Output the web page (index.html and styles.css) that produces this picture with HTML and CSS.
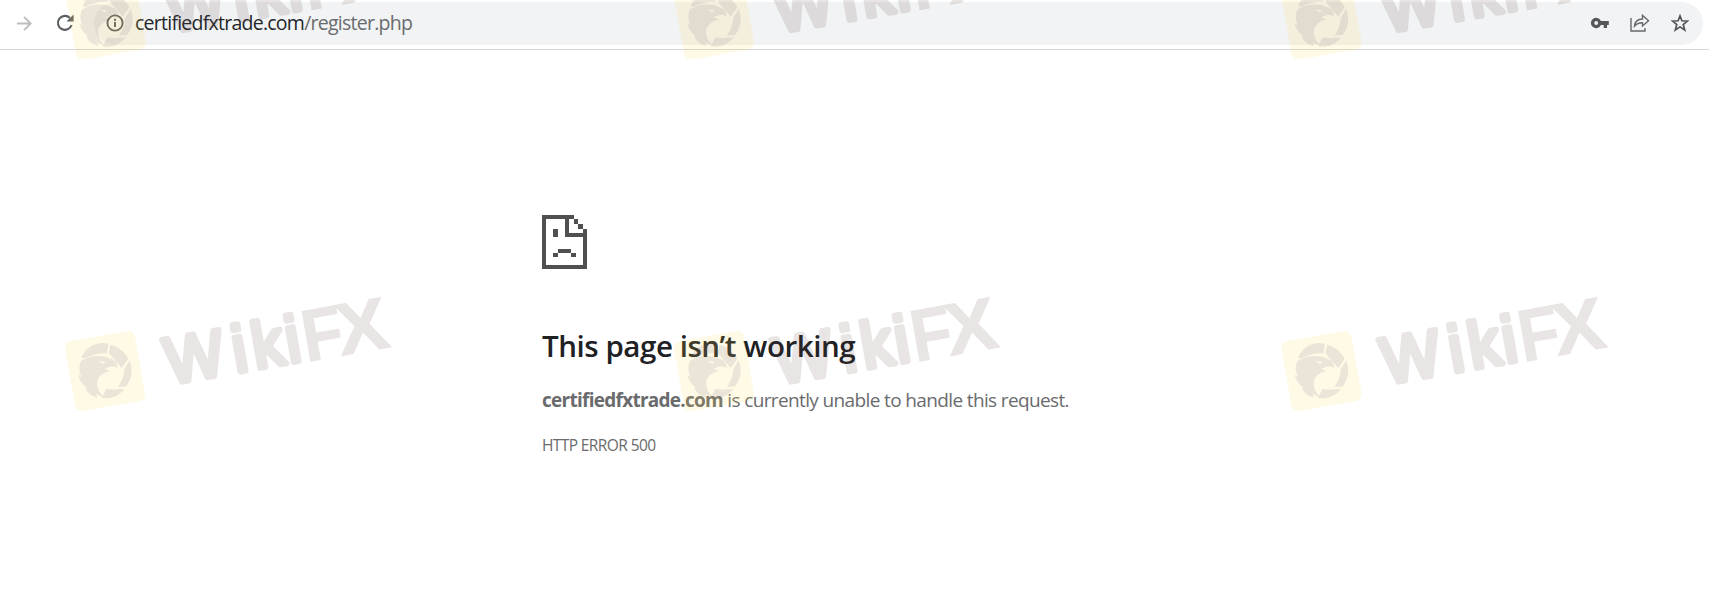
FILE: index.html
```html
<!DOCTYPE html>
<html lang="en">
<head>
<meta charset="utf-8">
<title>certifiedfxtrade.com</title>
<link rel="stylesheet" href="styles.css">
</head>
<body>
<header class="toolbar">
  <svg class="icon forward" viewBox="0 0 18 18"><path d="M1 9H15M8.5 2L15.5 9L8.5 16" fill="none" stroke="#bcbdbf" stroke-width="2"/></svg>
  <svg class="icon reload" viewBox="0 0 18 18"><path d="M15.6 11A7 7 0 1 1 14 4" fill="none" stroke="#5b5e61" stroke-width="2.1"/><path d="M17.6 .6V7.5H10.5Z" fill="#5b5e61"/></svg>
  <div class="omnibox">
    <svg class="icon info" viewBox="0 0 18 18"><circle cx="9" cy="9" r="7.6" fill="none" stroke="#5b5e61" stroke-width="1.9"/><path d="M8 8h2v5H8zM8 4.8h2v2H8z" fill="#5b5e61"/></svg>
    <span class="url"><span class="host">certifiedfxtrade.com</span>/register.php</span>
    <div class="actions">
      <svg class="icon key" viewBox="0 0 18 12"><path d="M9.9 4A5.2 5.2 0 1 0 9.9 8H12.7V11H16V8H17.8V4ZM5.2 7.9A1.9 1.9 0 1 1 5.2 4.1A1.9 1.9 0 1 1 5.2 7.9Z" fill="#55585b" fill-rule="evenodd"/></svg>
      <svg class="icon share" viewBox="0 0 20 18"><path d="M1 4V17H15V14M4.5 12C5 7.5 7.5 5.2 12.5 5V1.3L18.5 6.7L12.5 12V8.7C9 8.7 6.5 9.7 4.5 12Z" fill="none" stroke="#66696c" stroke-width="1.4"/></svg>
      <svg class="icon star" viewBox="0 0 18 18"><path d="M9 1.9L10.9 6.8L16.4 7.1L12.2 10.6L13.7 16L9 12.9L4.3 16L5.8 10.6L1.6 7.1L7.1 6.8Z" fill="none" stroke="#55585b" stroke-width="1.7"/></svg>
    </div>
  </div>
</header>
<main class="error">
  <svg class="sad-page" viewBox="0 0 45 55" preserveAspectRatio="none" shape-rendering="crispEdges"><path d="M0 0H32V4H36V9H41V14H45V55H0ZM4 4V51H41V22H23V4ZM27 4V18H41V14H36V9H32V4ZM11 14H16V22H11ZM16 35H29V39H16ZM11 39H16V43H11ZM29 39H34V43H29Z" fill="#505050" fill-rule="evenodd"/></svg>
  <h1 class="title">This page isn’t working</h1>
  <p class="message"><strong class="site">certifiedfxtrade.com</strong><span class="reason"> is currently unable to handle this request.</span></p>
  <p class="code">HTTP ERROR 500</p>
</main>
<svg class="watermarks" viewBox="0 0 1709 599" aria-hidden="true">
  <defs>
    <g id="mark">
      <rect x="-35.5" y="-35.5" width="71" height="71" rx="7" fill="#ffdc50" opacity=".14"/>
      <g fill="#645082" opacity=".12">
        <path d="M-18 -21C-10 -29 1 -30 8 -26L5 -17C-3 -19 -10 -18 -18 -16L-21 -17ZM10 -25C18 -21 23 -15 25 -8L17 0L11 -10L7 -17ZM26 -6C28 4 25 13 18 19L10 18C15 13 18 8 19 2ZM16 21C9 27 0 29 -8 26L-2 18C4 20 9 20 16 21Z"/>
        <path d="M-22 -14C-14 -18 0 -17 6 -12C11 -10 14 -7 13 -1C9 -4 4 -4 0 -2L5 1C-5 1 -11 7 -10 15C-10 19 -8 22 -5 26L-13 21L-12 25C-19 22 -22 17 -22 13L-20 14C-25 9 -27 3 -27 -1L-24 2C-26 -4 -25 -9 -22 -14ZM-5 -11L2 -9L0 -7Z" fill-rule="evenodd"/>
      </g>
      <g class="wordmark">
        <text class="soft" transform="translate(0 24) scale(1 1.05)"><tspan x="61">W</tspan><tspan x="129">i</tspan><tspan x="149">k</tspan><tspan x="183">i</tspan></text>
        <text class="sharp" transform="translate(200 26) scale(.95 1.05)">F</text>
        <text class="sharp" transform="translate(235 26) scale(1.1 1.05)">X</text>
      </g>
    </g>
  </defs>
  <use href="#mark" transform="translate(106 19.5) rotate(-10)"/>
  <use href="#mark" transform="translate(714 19.5) rotate(-10)"/>
  <use href="#mark" transform="translate(1321.5 19.5) rotate(-10)"/>
  <use href="#mark" transform="translate(105 371) rotate(-10)"/>
  <use href="#mark" transform="translate(714 371) rotate(-10)"/>
  <use href="#mark" transform="translate(1321.5 371) rotate(-10)"/>
</svg>
</body>
</html>
```
FILE: styles.css
```css
* { box-sizing: border-box; }
body {
  margin: 0;
  height: 599px;
  overflow: hidden;
  background: #fff;
  color: #6a6b6d;
  font-family: "Open Sans", "Noto Sans", sans-serif;
}
.toolbar {
  display: flex;
  align-items: center;
  height: 50px;
  padding: 0 6px 3px 16px;
  border-bottom: 1px solid #d5d6d7;
}
.icon { display: block; flex: none; width: 18px; height: 18px; }
.forward { width: 17px; height: 17px; }
.reload { margin-left: 23px; }
.omnibox {
  display: flex;
  align-items: center;
  flex: 1;
  height: 43px;
  margin-left: 20px;
  padding: 0 14px 0 12px;
  border-radius: 22px;
  background: #f1f3f4;
}
.url {
  margin-left: 11px;
  font-size: 19.5px;
  letter-spacing: -0.75px;
  line-height: 26px;
}
.host { color: #242629; }
.actions { display: flex; align-items: center; margin-left: auto; gap: 21px; }
.key { height: 12px; }
.share { width: 20px; }
.error { padding: 165px 0 0 542px; }
.sad-page { display: block; width: 45px; height: 54px; }
.title {
  margin: 57px 0 0;
  color: #202124;
  font-size: 29.5px;
  font-weight: 600;
  letter-spacing: -0.45px;
  line-height: 40px;
}
.message { margin: 21px 0 0; font-size: 19px; line-height: 26px; letter-spacing: -0.63px; }
.site { font-weight: 700; letter-spacing: -0.73px; }
.code { margin: 21px 0 0; font-size: 15.5px; line-height: 22px; letter-spacing: -0.6px; }
.watermarks {
  position: absolute;
  inset: 0;
  width: 1709px;
  height: 599px;
  pointer-events: none;
}
.wordmark {
  fill: #5a3c3c;
  stroke: #5a3c3c;
  stroke-linejoin: round;
  opacity: .13;
  font-family: "Liberation Sans", sans-serif;
}
.soft { font-size: 62px; stroke-width: 5.5px; }
.sharp { font-size: 70px; font-weight: 700; stroke-width: 1px; }
```
